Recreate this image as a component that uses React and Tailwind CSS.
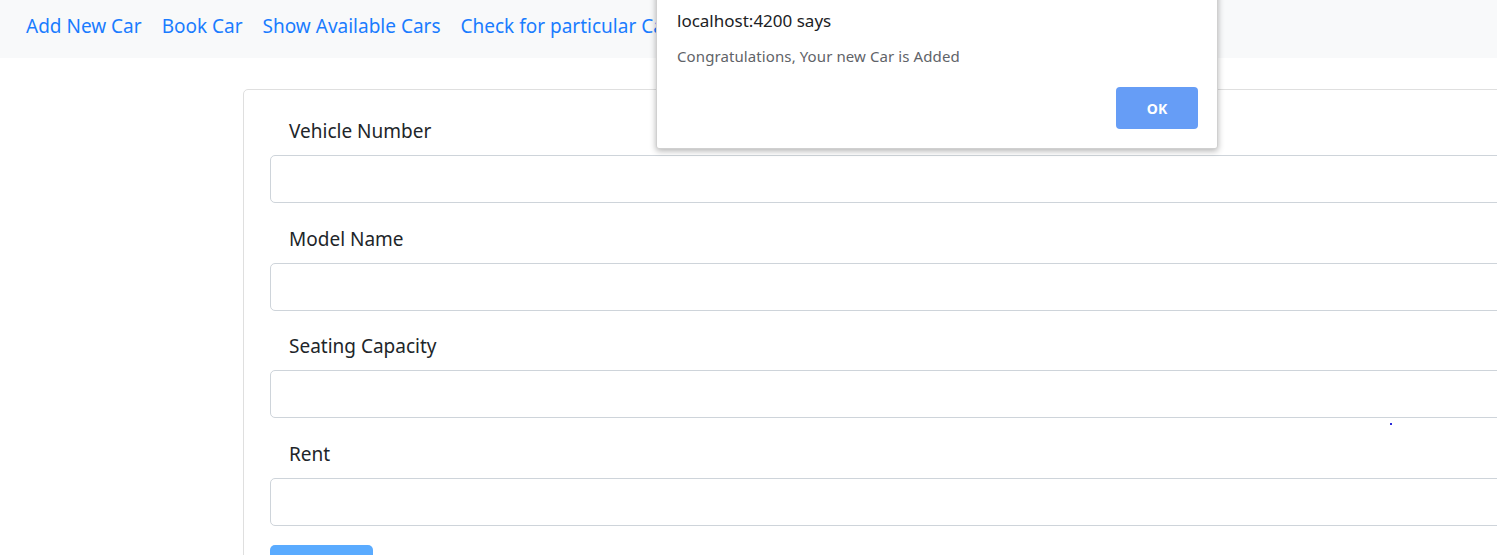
export default function App() {
  const fields = ["Vehicle Number", "Model Name", "Seating Capacity", "Rent"];

  return (
    <div
      className="relative h-[555px] w-[1497px] overflow-hidden bg-white"
      style={{ fontFamily: '"Noto Sans", "Open Sans", sans-serif' }}
    >
      {/* navbar */}
      <nav className="flex h-[58px] items-center gap-5 bg-[#f8f9fa] px-[26px] pb-[6px] text-[19px] text-[#1a7cff]">
        <a>Add New Car</a>
        <a>Book Car</a>
        <a>Show Available Cars</a>
        <a>Check for particular Car</a>
      </nav>

      {/* form card */}
      <div className="ml-[243px] mt-[31px] w-[1400px] rounded-[5px] border border-[#dfdfdf] pl-[26px] pt-[19px]">
        {fields.map((f) => (
          <div key={f} className="mb-[13.5px]">
            <label className="block pl-[19px] text-[19px] leading-[45px] text-[#212529]">
              {f}
            </label>
            <input
              type="text"
              className="mt-[1px] block h-[48px] w-[1300px] rounded-[5px] border border-[#ced4da] bg-white"
            />
          </div>
        ))}
        <button className="mt-[6px] h-[40px] w-[103px] rounded-t-[5px] bg-[#5aabff]" />
      </div>

      {/* stray dot */}
      <div className="absolute left-[1390px] top-[423px] h-[2px] w-[2px] bg-[#2b2bd9]" />

      {/* alert dialog */}
      <div className="absolute left-[656px] top-[-10px] h-[159px] w-[562px] rounded-b-[3px] border border-[#d0d0d0] bg-white shadow-[0_2px_6px_rgba(0,0,0,0.3)]">
        <div className="pl-[20px] pt-[18px] text-[17px] leading-[24px] text-[#202124]">
          localhost:4200 says
        </div>
        <div className="pl-[20px] pt-[12px] text-[15px] leading-[22px] tracking-[0.1px] text-[#5f6368]">
          Congratulations, Your new Car is Added
        </div>
        <div className="flex justify-end pr-[19px] pt-[20px]">
          <button className="h-[42px] w-[82px] rounded-[4px] bg-[#669df6] text-[14px] font-bold text-white">
            OK
          </button>
        </div>
      </div>
    </div>
  );
}
